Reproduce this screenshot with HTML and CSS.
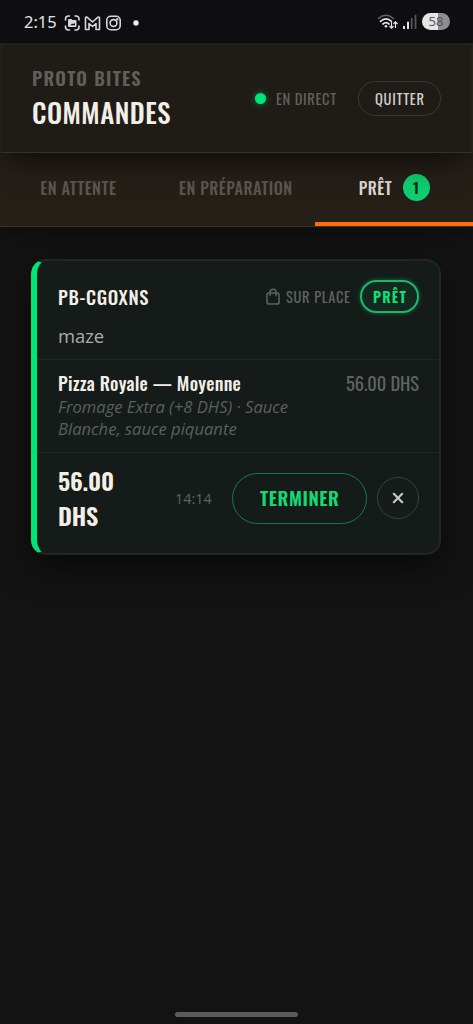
FILE: index.html
```html
<!DOCTYPE html>
<html lang="fr">
<head>
<meta charset="utf-8">
<title>Commandes</title>
<link rel="stylesheet" href="styles.css">
</head>
<body>
<div class="status">
  <span class="clock">2:15</span>
  <svg class="st-left" width="76" height="20" viewBox="0 0 76 20" fill="none" stroke="#d8d8da" stroke-width="1.6" stroke-linecap="round" stroke-linejoin="round">
    <path d="M1.500 6V5q0-3 3-3h1M11 2h1q3 0 3 3v1M15 12v1q0 3-3 3h-1M5.500 16h-1q-3 0-3-3v-1"/>
    <path fill-rule="evenodd" d="M5.500 5h2l1 1h3q1 0 1 1v5q0 1-1 1h-6.500q-1 0-1-1v-6q0-1 1.500-1zM6.200 11.300h4.800V9L9.500 10.300 8.200 9.500z" fill="#d8d8da" stroke="none"/>
    <path d="M21.500 15.500V4.200q0-1.700 1.500-1L28.500 8 34 3.200q1.500-.7 1.500 1v11.300H32V9.500L28.500 12.500 25 9.500v6z" stroke-width="1.600"/>
    <rect x="42.800" y="2.300" width="13.400" height="13.400" rx="4"/>
    <circle cx="49.500" cy="9" r="3.400"/>
    <circle cx="53.300" cy="5.200" r=".5"/>
    <circle cx="72" cy="9" r="2.700" fill="#f0f0f0" stroke="none"/>
  </svg>
  <svg class="st-right" width="40" height="18" viewBox="0 0 40 18" fill="none" stroke-linecap="round">
    <path d="M1.500 5.500q7.500-6.500 15 0" stroke="#66666a" stroke-width="1.600"/>
    <path d="M3.500 8.300q5.500-5 11 0M6 11q3-2.600 6 0" stroke="#e8e8e8" stroke-width="1.700"/>
    <circle cx="9" cy="13.300" r="1.300" fill="#e8e8e8"/>
    <path d="M14.500 9.500v5.500M12.800 13.500l1.700 1.700 1.700-1.700M18.500 14.500V9M16.800 10.500l1.700-1.700 1.700 1.700" stroke="#e8e8e8" stroke-width="1.200"/>
    <path d="M27 13.700v1.500M31 9.500v5.700" stroke="#e8e8e8" stroke-width="2"/>
    <path d="M34.700 6v9.200M38.500 2.500v12.700" stroke="#55555a" stroke-width="1.800"/>
  </svg>
  <span class="battery">58</span>
</div>
<header class="header">
  <div class="brand">
    <div class="t brand-name">PROTO BITES</div>
    <div class="t brand-title">COMMANDES</div>
  </div>
  <i class="live-dot"></i>
  <span class="t live">EN DIRECT</span>
  <div class="quit"><span class="t quit-label">QUITTER</span></div>
</header>
<nav class="tabs">
  <div class="tab"><span class="t tab-wait">EN ATTENTE</span></div>
  <div class="tab"><span class="t tab-prep">EN PRÉPARATION</span></div>
  <div class="tab active"><span class="t tab-ready">PRÊT</span><span class="count">1</span></div>
</nav>
<main class="main">
  <article class="card">
    <section class="card-head">
      <div class="row">
        <span class="t order">PB-CGOXNS</span>
        <svg class="bag" width="14" height="17" viewBox="0 0 14 17" fill="none" stroke="#60645f" stroke-width="1.500" stroke-linejoin="round"><rect x="1" y="5" width="12" height="11" rx="1.800"/><path d="M4 7.500V4.200q0-3 3-3t3 3v3.300" stroke-linecap="round"/></svg>
        <span class="t place">SUR PLACE</span>
        <div class="pill"><span class="t pill-label">PRÊT</span></div>
      </div>
      <div class="customer">maze</div>
    </section>
    <section class="item">
      <div class="row">
        <span class="t item-name">Pizza Royale — Moyenne</span>
        <span class="t item-price">56.00 DHS</span>
      </div>
      <div class="options">Fromage Extra (+8 DHS) · Sauce<br>Blanche, sauce piquante</div>
    </section>
    <section class="foot">
      <div class="total t">56.00<br>DHS</div>
      <span class="time">14:14</span>
      <div class="finish"><span class="t finish-label">TERMINER</span></div>
      <div class="cancel"><svg width="12" height="12" viewBox="0 0 12 12" fill="none" stroke="#c9c7c1" stroke-width="2.200" stroke-linecap="round"><path d="M1.800 1.800l8.400 8.400M10.200 1.800l-8.400 8.400"/></svg></div>
    </section>
  </article>
</main>
<div class="home"></div>
</body>
</html>
```
FILE: styles.css
```css
* { box-sizing: border-box; }
body { margin: 0; width: 473px; height: 1024px; display: flex; flex-direction: column; background: #131313; font-family: "Open Sans", sans-serif; overflow: hidden; }
.t { flex: none; font-family: Oswald, "Roboto Condensed", sans-serif; white-space: nowrap; }
.status { height: 43px; flex: none; display: flex; align-items: center; padding: 0 23px 0 24px; background: #0f0f11; color: #e4e4e6; }
.clock { width: 40px; font: 16.500px/20px "Noto Sans", sans-serif; }
.st-left { margin-top: 4px; }
.st-right { margin-left: auto; margin-right: 5px; }
.battery { width: 28px; height: 17px; border-radius: 9px; background: linear-gradient(90deg, #e6e6e6 58%, #8e8e90 58%); color: #55555a; font: 13px/17px "Noto Sans", sans-serif; text-align: center; }
.header { height: 110px; flex: none; display: flex; align-items: center; padding: 0 30px; background: #1f1c17; border: 2px solid #24211c; border-bottom: 1px solid #35322b; box-shadow: 0 14px 28px -6px rgba(0,0,0,.6); position: relative; color: #f3efe7; }
.brand { margin-right: auto; padding-bottom: 4px; }
.brand-name { width: 109px; font-size: 18.500px; line-height: 31px; font-weight: 600; letter-spacing: 1.250px; color: #625e58; }
.brand-title { width: 140px; font-size: 26.800px; line-height: 38px; font-weight: 550; letter-spacing: .5px; }
.live-dot { width: 11px; height: 11px; border-radius: 50%; background: #00e676; box-shadow: 0 0 6px rgba(0,230,118,.5); margin-right: 10px; }
.live { width: 60px; font-size: 14.500px; font-weight: 400; letter-spacing: .640px; color: #65615a; }
.quit { width: 83px; height: 35px; margin-left: 22px; border: 1px solid #3b3832; border-radius: 18px; display: flex; align-items: center; justify-content: center; color: #d2cec5; }
.quit-label { width: 49px; font-size: 14.500px; font-weight: 400; letter-spacing: .710px; }
.tabs { height: 74px; flex: none; display: grid; grid-template-columns: 1fr 1fr 1fr; background: #251f18; border-bottom: 1px solid #3a3028; box-shadow: 0 6px 16px rgba(0,0,0,.35); font-size: 16.200px; font-weight: 550; letter-spacing: .5px; color: #5c564e; }
.tab { display: flex; align-items: center; justify-content: center; padding-bottom: 4px; }
.active { color: #dcd8d0; box-shadow: inset 0 -4px #ff6d0a; }
.tab-wait { width: 77px; }
.tab-prep { width: 115px; }
.tab-ready { width: 34px; margin-right: 10px; }
.count { width: 27px; height: 27px; border-radius: 50%; background: #0fcf70; color: #0d2d1c; font: 600 15.800px/27px Oswald, sans-serif; letter-spacing: 0; text-align: center; }
.main { padding: 32px 32px 0 31px; flex: 1; }
.card { height: 296px; border: 2px solid #212725; border-left: 6px solid #00e676; border-radius: 15px; background: #151b19; box-shadow: 0 12px 32px rgba(0,0,0,.5); color: #f3efe7; }
.row { display: flex; align-items: center; }
.card-head { height: 99px; padding: 19px 20px 0 21px; border-bottom: 1px solid #202624; }
.order { width: 92px; margin-right: auto; font-size: 18.600px; font-weight: 550; letter-spacing: .650px; }
.bag { margin-right: 6px; }
.place { width: 64px; font-size: 14.500px; letter-spacing: .660px; color: #60645f; }
.pill { width: 59px; height: 33px; margin-left: 10px; border: 2px solid #1fb56a; border-radius: 17px; background: #13291f; box-shadow: 0 0 4px rgba(0,230,118,.45); display: flex; align-items: center; justify-content: center; color: #0fe078; }
.pill-label { width: 33px; font-size: 14.500px; font-weight: 600; letter-spacing: 1.200px; }
.customer { margin-top: 8px; font: 18.400px/29px "Open Sans", sans-serif; color: #aeaca6; }
.item { height: 93px; padding: 11px 20px 0 21px; border-bottom: 1px solid #202624; }
.item-name { width: 183px; margin-right: auto; font-size: 18.400px; line-height: 24px; font-weight: 500; letter-spacing: .240px; }
.item-price { width: 73px; font-size: 18.400px; line-height: 24px; font-weight: 400; letter-spacing: -.05px; color: #60645f; }
.options { margin-top: 1px; font: italic 16.600px/21.500px "Open Sans", sans-serif; color: #5b605c; white-space: nowrap; }
.foot { height: 93px; padding: 0 20px 3px 21px; display: flex; align-items: center; }
.total { width: 117px; font-size: 24.200px; line-height: 35px; font-weight: 600; letter-spacing: -.2px; }
.time { width: 57px; font-size: 14.400px; color: #60645f; }
.finish { width: 135px; height: 51px; flex: none; border: 1px solid #157a4a; border-radius: 26px; display: flex; align-items: center; justify-content: center; color: #14d873; }
.finish-label { width: 79px; padding-bottom: 1px; font-size: 18.600px; font-weight: 600; letter-spacing: .600px; }
.cancel { width: 42px; height: 42px; flex: none; margin-left: 10px; border: 1px solid #3b403e; border-radius: 50%; display: flex; align-items: center; justify-content: center; }
.home { width: 123px; height: 5px; border-radius: 3px; background: #5a5a5a; margin: 0 auto 7px; }
```
